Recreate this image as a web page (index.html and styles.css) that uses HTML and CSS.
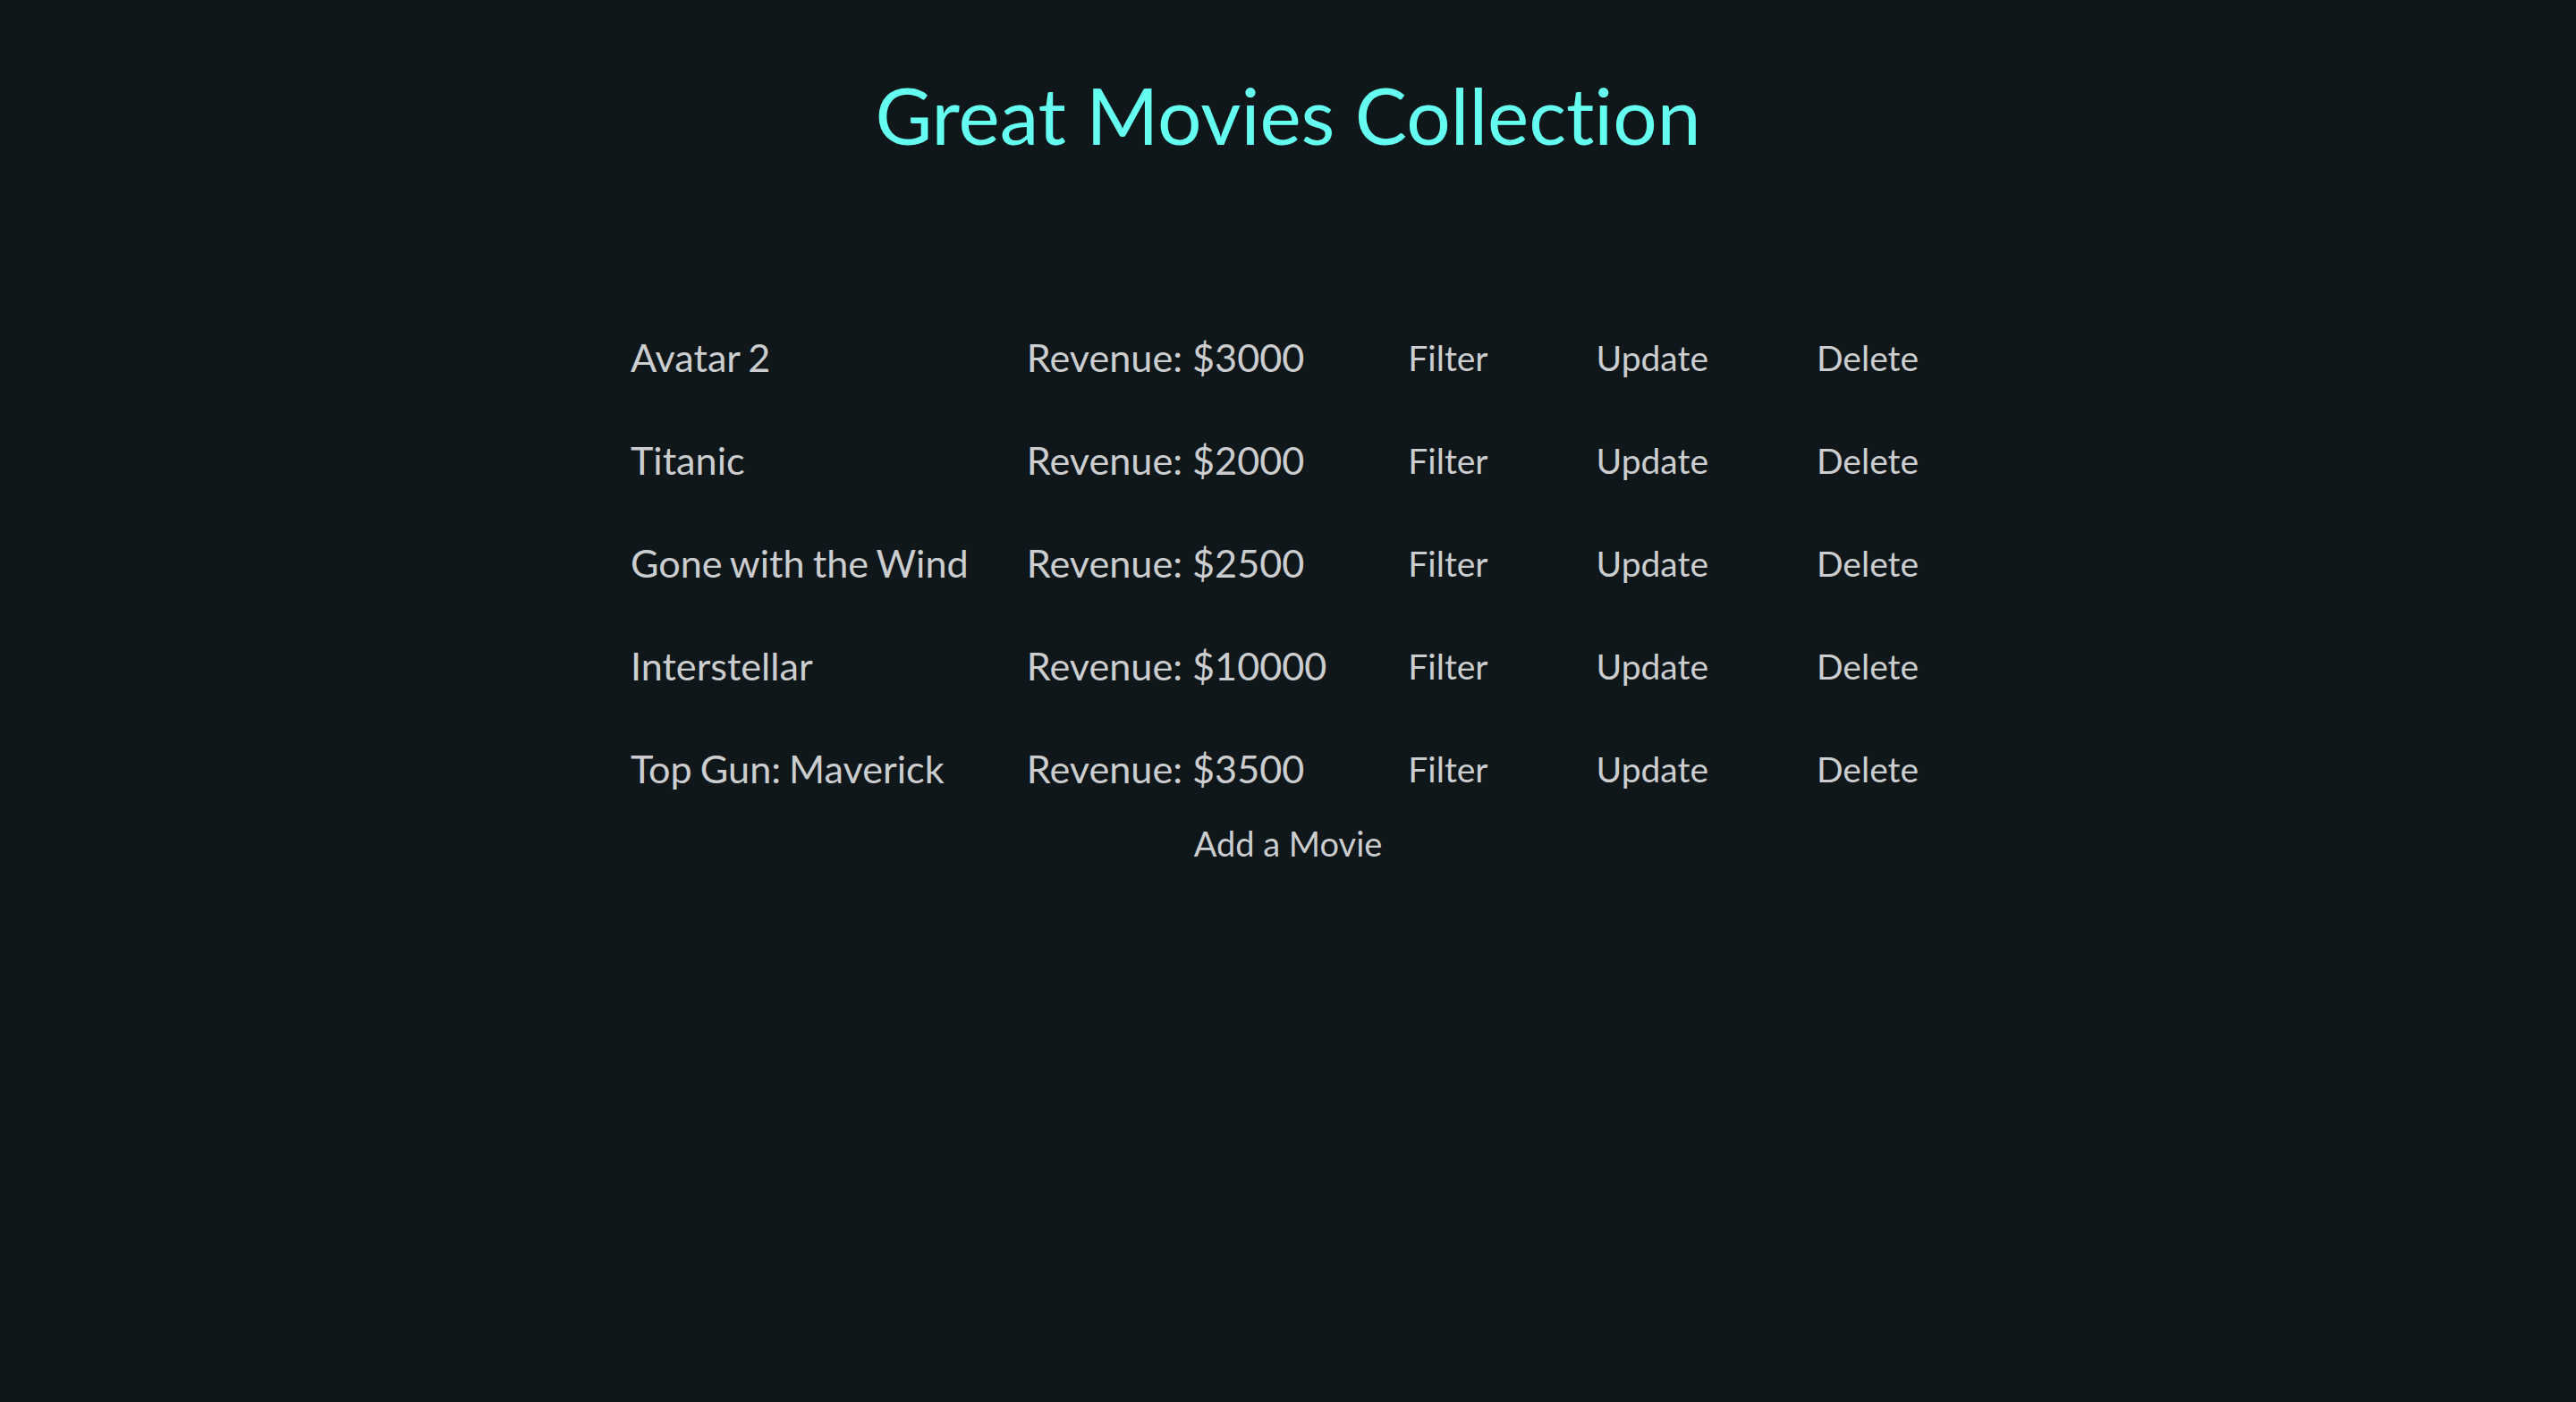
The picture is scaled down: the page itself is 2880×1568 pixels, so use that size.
FILE: index.html
```html
<!DOCTYPE html>
<html lang="en">
<head>
<meta charset="utf-8">
<title>Great Movies Collection</title>
<link rel="stylesheet" href="styles.css">
</head>
<body>
<main class="page">
  <h1 class="title">Great Movies Collection</h1>
  <section class="movies">
    <div class="movie-row">
      <span class="movie-name">Avatar 2</span>
      <span class="movie-revenue">Revenue: $3000</span>
      <button class="action">Filter</button>
      <button class="action">Update</button>
      <button class="action">Delete</button>
    </div>
    <div class="movie-row">
      <span class="movie-name">Titanic</span>
      <span class="movie-revenue">Revenue: $2000</span>
      <button class="action">Filter</button>
      <button class="action">Update</button>
      <button class="action">Delete</button>
    </div>
    <div class="movie-row">
      <span class="movie-name">Gone with the Wind</span>
      <span class="movie-revenue">Revenue: $2500</span>
      <button class="action">Filter</button>
      <button class="action">Update</button>
      <button class="action">Delete</button>
    </div>
    <div class="movie-row">
      <span class="movie-name">Interstellar</span>
      <span class="movie-revenue">Revenue: $10000</span>
      <button class="action">Filter</button>
      <button class="action">Update</button>
      <button class="action">Delete</button>
    </div>
    <div class="movie-row">
      <span class="movie-name">Top Gun: Maverick</span>
      <span class="movie-revenue">Revenue: $3500</span>
      <button class="action">Filter</button>
      <button class="action">Update</button>
      <button class="action">Delete</button>
    </div>
  </section>
  <div class="add-wrap">
    <button class="action add">Add a Movie</button>
  </div>
</main>
</body>
</html>
```
FILE: styles.css
```css
html, body {
  margin: 0;
  padding: 0;
  background: #0f171a;
}
body {
  font-family: Lato, "Open Sans", sans-serif;
  font-variant-ligatures: none;
  color: #cbcdcf;
  height: 1568px;
}
.page {
  display: flex;
  flex-direction: column;
  align-items: center;
  padding-top: 77px;
}
.title {
  margin: 0;
  font-size: 87.4px;
  font-weight: 400;
  line-height: 1.2;
  color: #64fff1;
  text-align: center;
}
.movies {
  margin-top: 161px;
  display: grid;
  grid-template-columns: auto auto auto auto auto;
  column-gap: 61px;
}
.movie-row {
  display: contents;
}
.movie-name,
.movie-revenue {
  font-size: 43.2px;
  line-height: 1.2;
  height: 115px;
  display: flex;
  align-items: center;
}
.movie-name {
  word-spacing: -2px;
  margin-right: 4px;
}
.action {
  background: transparent;
  border: none;
  color: #cbcdcf;
  font-family: Lato, "Open Sans", sans-serif;
  font-variant-ligatures: none;
  font-size: 39px;
  line-height: 1.2;
  padding: 0 30px;
  height: 115px;
  cursor: pointer;
}
.add-wrap {
  margin-top: 3px;
  display: flex;
  justify-content: center;
}
.add {
  height: auto;
  padding: 0;
  font-size: 38px;
}
```
